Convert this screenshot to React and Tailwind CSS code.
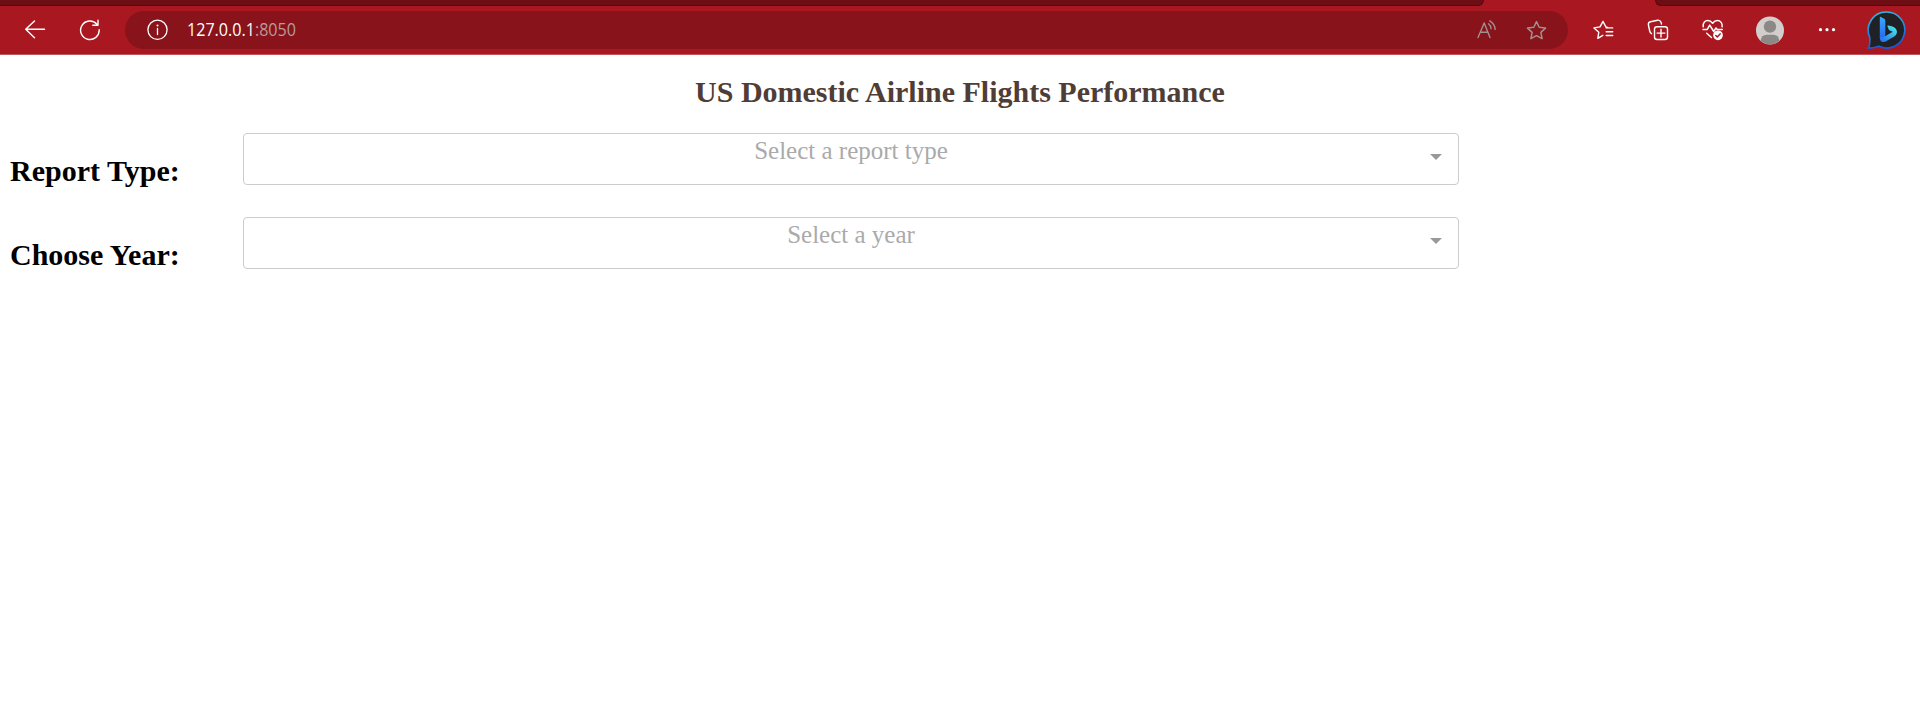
import React from 'react';

const line = { fill: 'none', stroke: 'currentColor', strokeLinecap: 'round', strokeLinejoin: 'round' };
const starPath = 'M10.5 1.6l2.7 5.7 6.3.8-4.6 4.3 1.2 6.3-5.6-3-5.6 3 1.2-6.3L1.5 8.1l6.3-.8z';

function BrowserBar() {
  return (
    <header className="bg-[#a91820] text-white h-[55px] flex flex-col border-b border-[#c0565b]">
      <div className="h-1.5 flex justify-between shrink-0">
        <div className="w-[1484px] bg-[#6d0d14] border-b border-r border-[#550a10] rounded-br-md" />
        <div className="w-[265px] bg-[#6d0d14] border-b border-l border-[#550a10] rounded-bl-md" />
      </div>
      <nav className="flex h-12 pt-[5px] items-start">
        <div className="w-[125px] h-[38px] flex items-center pl-6 gap-[33px] shrink-0">
          <svg className="w-[22px] h-[20px]" viewBox="0 0 22 20" {...line} strokeWidth="1.4">
            <path d="M20.5 9.2H1.7M10.5 .9L1.7 9.2l8.8 8.5" />
          </svg>
          <svg className="w-[22px] h-[22px]" viewBox="0 0 22 22" {...line} strokeWidth="1.4">
            <path d="M20.2 10.6A9.3 9.3 0 1 1 18 5.2M19 1.2v5h-5.2" />
          </svg>
        </div>
        <div className="w-[1443px] h-[38px] bg-[#88131a] rounded-full flex items-center pl-[22px] pr-[21px] shrink-0">
          <svg className="w-[22px] h-[22px]" viewBox="0 0 22 22" {...line} strokeWidth="1.3">
            <circle cx="10.5" cy="10.8" r="9.6" />
            <path d="M10.5 9.5v6" />
            <circle cx="10.5" cy="6.5" r=".4" fill="currentColor" />
          </svg>
          <span className="ml-[18px] mb-0.5 font-['Open_Sans',sans-serif] text-[17.5px] leading-6 w-[112px] whitespace-nowrap">
            <span className="inline-block origin-left scale-x-[.92]">
              127.0.0.1<span className="text-[#b99a9b]">:8050</span>
            </span>
          </span>
          <div className="ml-auto flex items-center gap-[28px] text-[#a09090]">
            <svg className="w-[21px] h-[20px]" viewBox="0 0 21 20" {...line} strokeWidth="1.4">
              <path d="M1 17.5L7.2 3l5.8 14.5M3.3 12.3h7.7M11.5 3.8q2.5 1.8 2.5 5M12.7 .9q5.2 3 5.4 8.5" />
            </svg>
            <svg className="w-[21px] h-[21px]" viewBox="0 0 21 21" {...line} strokeWidth="1.5">
              <path d={starPath} />
            </svg>
          </div>
        </div>
        <div className="flex h-[38px] items-center pl-[25px] shrink-0">
          <svg className="w-[21px] h-[21px]" viewBox="0 0 21 21" {...line} strokeWidth="1.4">
            <path d="M9.8 15.3l-5 3 1-6.1L1 7.9l6-1 3-5.5 2.9 5.6 1.6.5M13.2 7.9h6.5M13.2 11.7h6.5M13.2 15.5h6.5" />
          </svg>
          <svg className="w-[22px] h-[22px] ml-[33px]" viewBox="0 0 22 22" {...line} strokeWidth="1.4">
            <rect x="7.5" y="7.7" width="13" height="12.8" rx="2.5" />
            <path d="M14 10.2v7.8M10.1 14.1h7.8M4.5 14.7Q3.1 13.8 2.7 12L1.4 6Q1 3.4 3.5 2.8L10.6 1.2Q13.2.9 14 3.3l.5 1.7" />
          </svg>
          <svg className="w-[22px] h-[22px] ml-[33px]" viewBox="0 0 22 22" {...line} strokeWidth="1.5">
            <path d="M1.2 7.8C.7 3.2 3.4 1.6 5.7 1.6c2.2 0 3.6 1 4.9 2.7 1.3-1.7 2.8-2.7 4.9-2.7 2.5 0 5.2 2 4.6 6.2M1 10.4h4.3l2.4-4.3 4 6.4 2.3-3.5 1.3 1.4h5M4.7 14.2l4.8 4.3" />
            <circle cx="16" cy="16.3" r="4.1" fill="currentColor" />
            <path d="M13.8 16.5l1.5 1.4 2.8-3" stroke="#a91820" />
          </svg>
          <svg className="w-[29px] h-[29px] ml-[32px]" viewBox="0 0 29 29">
            <circle cx="14" cy="14.5" r="14" fill="#d1cecb" />
            <circle cx="14" cy="10.6" r="6.2" fill="#8b8886" />
            <path d="M4.6 24.8Q5.5 18.8 10.5 18.8h7q5 0 5.9 6Q19 28.5 14 28.5T4.6 24.8" fill="#8b8886" />
          </svg>
          <svg className="w-[18px] h-[6px] ml-[33px]" viewBox="0 0 18 6" fill="currentColor">
            <circle cx="2.5" cy="2.7" r="1.6" /><circle cx="9" cy="2.7" r="1.6" /><circle cx="15.5" cy="2.7" r="1.6" />
          </svg>
          <svg className="w-[40px] h-[40px] ml-[31px]" viewBox="0 0 40 40">
            <defs>
              <linearGradient id="bubble" x1="0" y1="0" x2=".2" y2="1">
                <stop stopColor="#35bfe0" /><stop offset="1" stopColor="#1759d6" />
              </linearGradient>
              <linearGradient id="stem" x1="0" y1="0" x2="0" y2="1">
                <stop stopColor="#3ba9fb" /><stop offset="1" stopColor="#245fee" />
              </linearGradient>
              <linearGradient id="bowl" x1="0" y1="1" x2=".7" y2="0">
                <stop stopColor="#2268ef" /><stop offset="1" stopColor="#4ae0e5" />
              </linearGradient>
            </defs>
            <path d="M19.6 2A18 18 0 1 1 11.9 36.2Q7.9 37.8 1.5 38.3 3.4 34.5 2.7 27.2A18 18 0 0 1 19.6 2Z" fill="#202124" stroke="url(#bubble)" strokeWidth="1.6" />
            <path d="M12.8 7.6Q12.6 6.4 13.8 7l3.4 1.8q1.1.7 1.1 2v14.7l-1.5 6Q12.8 31 12.8 27Z" fill="url(#stem)" />
            <path d="M21.5 15.6q-1.5-.7-1 .8l1.2 3q.3.7 1 1l3.1 1.3-8.1 4.9q-2.6 1.8-4.9.4 0 7 5.9 4.4l8.9-5.2q3.1-2.2 2.1-5.6-1.1-3.8-8.2-5Z" fill="url(#bowl)" />
          </svg>
        </div>
      </nav>
    </header>
  );
}

function SelectRow({ label, placeholder }) {
  return (
    <div className="flex h-[52px]">
      <h2 className="w-[233px] shrink-0 pt-[21px] text-[30px] leading-[34px] font-bold text-black whitespace-nowrap">{label}</h2>
      <div className="w-[1216px] h-[52px] border border-[#ccc] rounded flex items-start text-[25px] text-[#aaa]">
        <div className="flex-1 text-center leading-[34px] pl-7">{placeholder}</div>
        <svg className="w-3 h-1.5 mt-5 mr-4 shrink-0" viewBox="0 0 12 6" fill="#999">
          <path d="M0 0h12L6 6z" />
        </svg>
      </div>
    </div>
  );
}

export default function App() {
  return (
    <div className="h-[701px] overflow-hidden bg-white font-['Liberation_Serif',serif]">
      <BrowserBar />
      <main className="px-2.5">
        <h1 className="pt-[20px] h-[78px] text-center text-[30px] leading-[34px] font-bold text-[#503d36]">
          US Domestic Airline Flights Performance
        </h1>
        <div className="flex flex-col gap-8">
          <SelectRow label="Report Type:" placeholder="Select a report type" />
          <SelectRow label="Choose Year:" placeholder="Select a year" />
        </div>
      </main>
    </div>
  );
}
